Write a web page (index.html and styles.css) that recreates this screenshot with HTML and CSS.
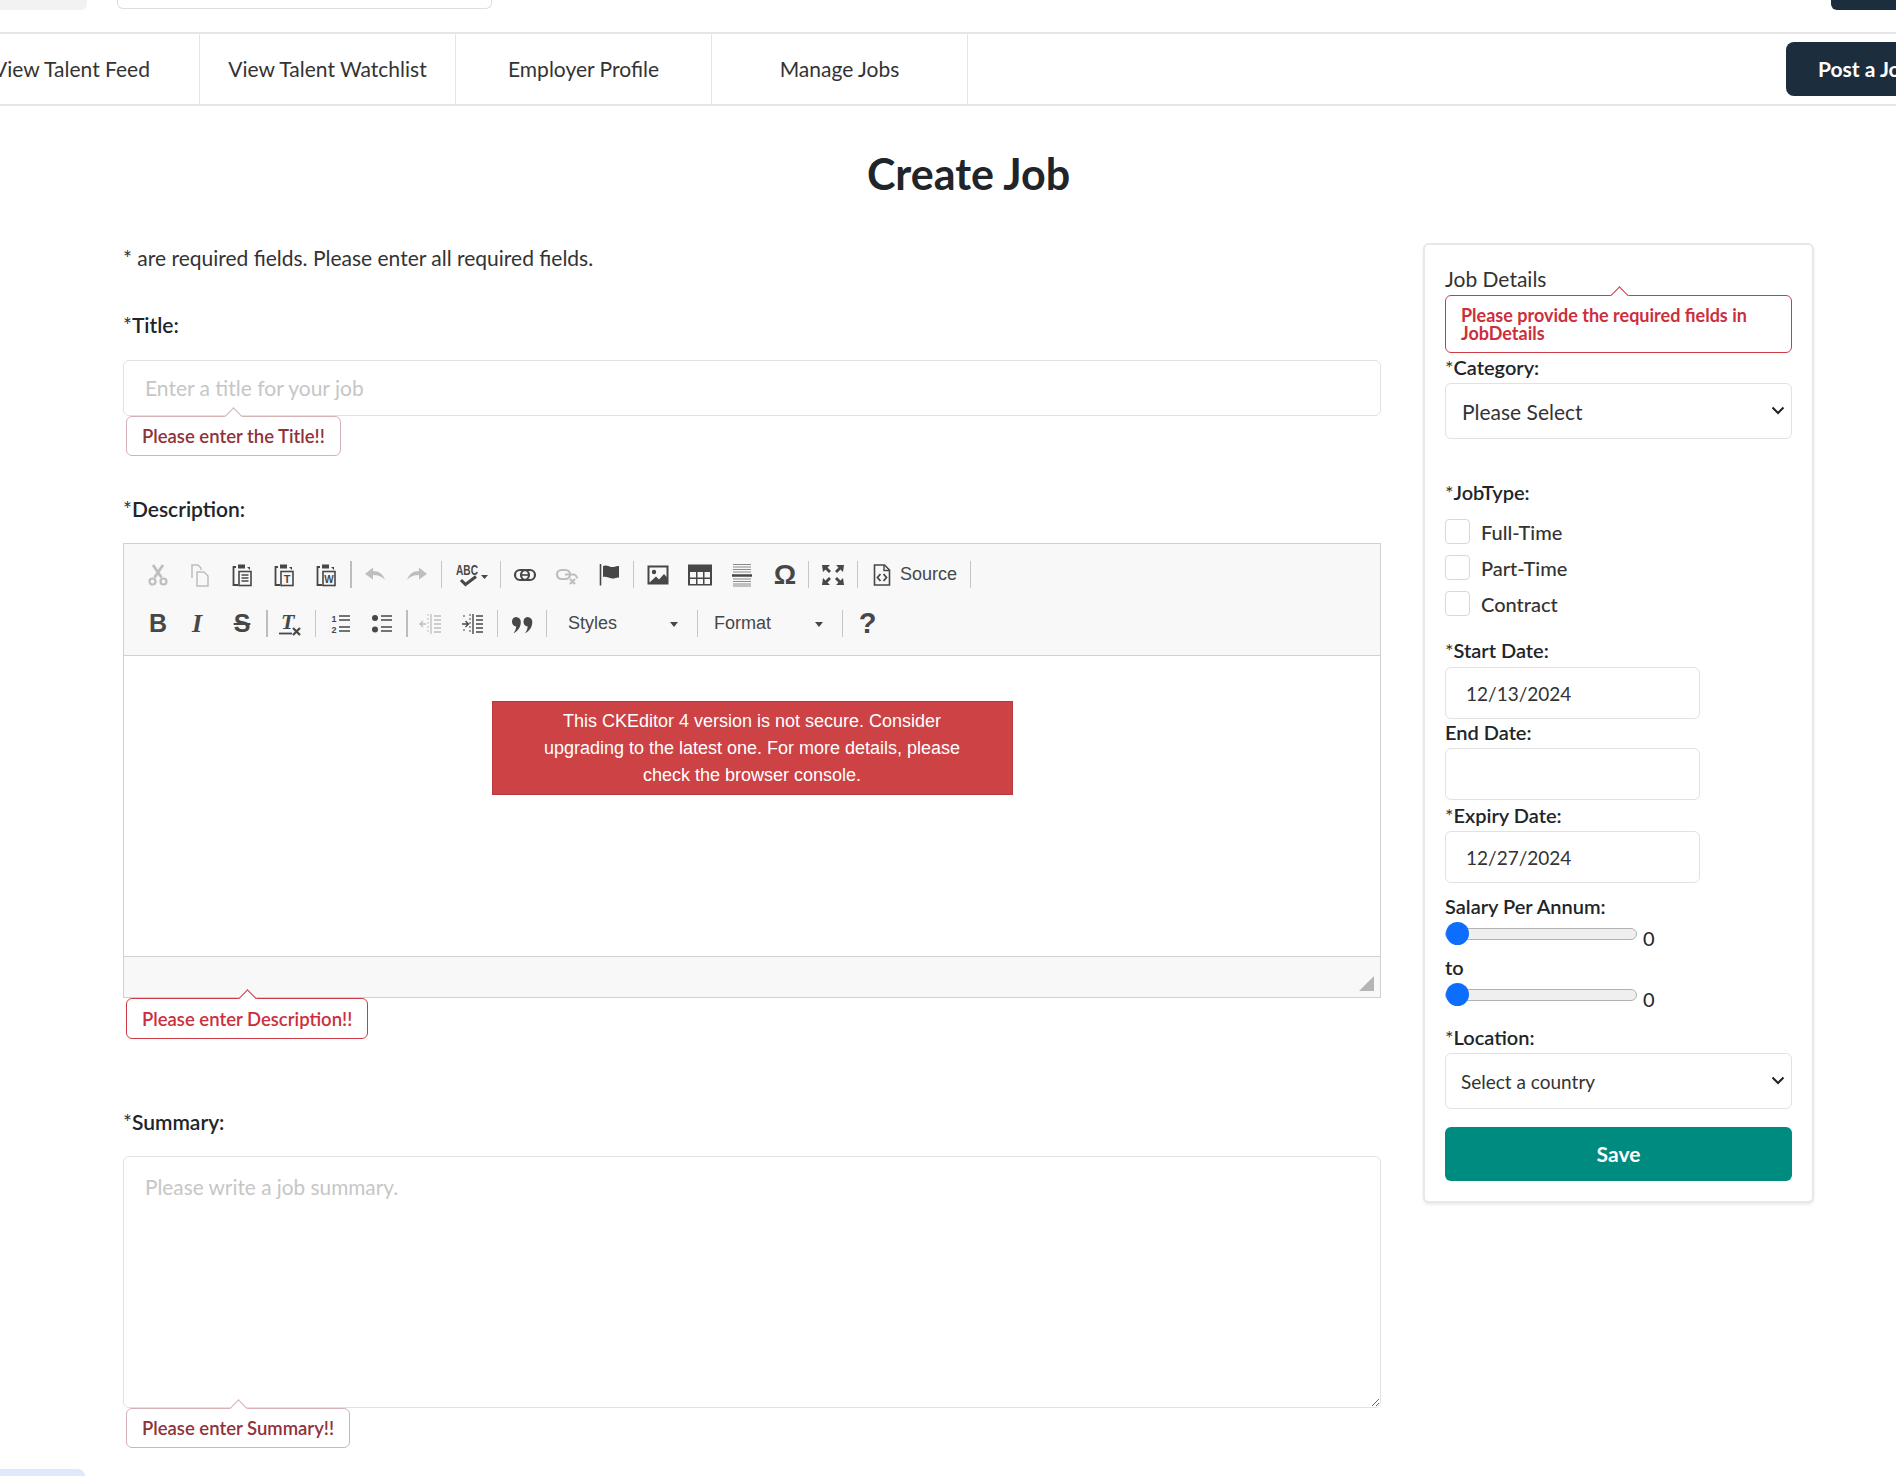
FILE: index.html
```html
<!DOCTYPE html>
<html lang="en">
<head>
<meta charset="utf-8">
<title>Create Job</title>
<link rel="stylesheet" href="styles.css">
</head>
<body>
<header class="topbar">
  <div class="top-chip"></div>
  <div class="top-search"></div>
  <div class="top-btn"></div>
</header>
<nav class="nav">
  <a class="nav-item">View Talent Feed</a>
  <a class="nav-item">View Talent Watchlist</a>
  <a class="nav-item">Employer Profile</a>
  <a class="nav-item">Manage Jobs</a>
  <button class="post-btn">Post a Job</button>
</nav>
<main class="page">
  <h1 class="page-title">Create Job</h1>
  <div class="columns">
    <section class="form-col">
      <p class="req-note">* are required fields. Please enter all required fields.</p>

      <label class="label label-title"><span class="star">*</span>Title:</label>
      <input class="field field-title" type="text" placeholder="Enter a title for your job">
      <div class="tip tip-faded">Please enter the Title!!</div>

      <label class="label label-desc"><span class="star">*</span>Description:</label>
      <div class="editor">
        <div class="toolbar">
          <div class="tb-row">
            <span class="ic off"><svg viewBox="0 0 24 24" width="24" height="24"><path d="M7 2l8.500 12.500M17 2L8.500 14.500" class="st" stroke-width="2.800"/><circle cx="6.500" cy="18.500" r="3" class="st" stroke-width="2.200"/><circle cx="17.500" cy="18.500" r="3" class="st" stroke-width="2.200"/></svg></span>
            <span class="ic off"><svg viewBox="0 0 24 24" width="24" height="24"><path d="M4 15V2h6l3 3v2" class="st" stroke-width="1.500"/><path d="M9 9h7l4 4v10H9z" class="st" stroke-width="1.500"/></svg></span>
            <span class="ic"><svg viewBox="0 0 24 24" width="24" height="24"><path d="M6 4H3.500v18H8" class="st" stroke-width="1.800"/><path d="M8 1.500h7v4H8zM17 4h3v3" class="fl"/><rect x="9" y="8.500" width="12" height="14" class="st" stroke-width="1.600"/><path d="M11.500 12h7M11.500 15h7M11.500 18h7" class="st" stroke-width="1.500"/></svg></span>
            <span class="ic"><svg viewBox="0 0 24 24" width="24" height="24"><path d="M6 4H3.500v18H8" class="st" stroke-width="1.800"/><path d="M8 1.500h7v4H8zM17 4h3v3" class="fl"/><rect x="9" y="8.500" width="12" height="14" class="st" stroke-width="1.600"/><text x="15" y="20" class="svg-t" font-size="11" text-anchor="middle">T</text></svg></span>
            <span class="ic"><svg viewBox="0 0 24 24" width="24" height="24"><path d="M6 4H3.500v18H8" class="st" stroke-width="1.800"/><path d="M8 1.500h7v4H8zM17 4h3v3" class="fl"/><rect x="9" y="8.500" width="12" height="14" class="st" stroke-width="1.600"/><text x="15" y="20" class="svg-t" font-size="10" text-anchor="middle">W</text></svg></span>
            <span class="sep sep-dark"></span>
            <span class="ic off"><svg viewBox="0 0 24 24" width="24" height="24"><path d="M2 11l8-6.500V8c6 0 10 3 12 9-3-3.500-7-5-12-5v4.500z" class="fl"/></svg></span>
            <span class="ic off"><svg viewBox="0 0 24 24" width="24" height="24"><path d="M22 11l-8-6.500V8C8 8 4 11 2 17c3-3.500 7-5 12-5v4.500z" class="fl"/></svg></span>
            <span class="sep"></span>
            <span class="ic ic-spell"><svg viewBox="0 0 34 24" width="34" height="24"><text x="12" y="12" class="svg-t" font-size="14" text-anchor="middle" textLength="22" lengthAdjust="spacingAndGlyphs">ABC</text><path d="M6 17l4.500 4.500L21 13.500" class="st" stroke-width="3"/><path d="M26 12h7l-3.500 4z" class="fl"/></svg></span>
            <span class="sep"></span>
            <span class="ic"><svg viewBox="0 0 24 24" width="24" height="24"><rect x="2" y="7" width="14" height="10" rx="5" class="st" stroke-width="2.200"/><rect x="8" y="7" width="14" height="10" rx="5" class="st" stroke-width="2.200"/><path d="M8 12h8" class="st" stroke-width="1.600"/></svg></span>
            <span class="ic off"><svg viewBox="0 0 24 24" width="24" height="24"><rect x="2" y="7" width="13" height="9" rx="4.500" class="st" stroke-width="2.200"/><path d="M10 11.500h8a4 4 0 0 1 4 4" class="st" stroke-width="2.200"/><path d="M15 16l5 5M20 16l-5 5" class="st" stroke-width="2.200"/></svg></span>
            <span class="ic"><svg viewBox="0 0 24 24" width="24" height="24"><path d="M3.500 1v21.500" class="st" stroke-width="1.600"/><path d="M6 3c4-2 7 1.500 10 1s4-1 6-1v11.500c-3-.5-4 1.500-7 1s-6-2.500-9-1.500z" class="fl"/></svg></span>
            <span class="sep"></span>
            <span class="ic"><svg viewBox="0 0 24 24" width="24" height="24"><rect x="2.500" y="3.500" width="19" height="17" class="st" stroke-width="2"/><circle cx="8" cy="9" r="2.200" class="fl"/><path d="M3 20l7-6.500 3 3 5-5.500 4 4.500V20z" class="fl"/></svg></span>
            <span class="ic"><svg viewBox="0 0 24 24" width="24" height="24"><path d="M0 1.500h24v21H0z" class="fl"/><path d="M2 9h6v5.500H2zM9.500 9h5.500v5.500H9.500zM16.500 9H22v5.500h-5.500zM2 16h6v5H2zM9.500 16h5.500v5H9.500zM16.500 16H22v5h-5.500z" fill="#f8f8f8"/></svg></span>
            <span class="ic"><svg viewBox="0 0 24 24" width="24" height="24"><path d="M3 1.500h18M3 4h18M3 6.500h18M3 9h18M3 16h18M3 18.500h18M3 21h18M3 23h18" class="st st-lt" stroke-width="1"/><path d="M2 12.500h20" class="st" stroke-width="2.500"/></svg></span>
            <span class="ic ic-glyph ic-omega">Ω</span>
            <span class="sep"></span>
            <span class="ic"><svg viewBox="0 0 24 24" width="24" height="24"><path d="M1 2h8L6.500 4.500 10 8 8 10 4.500 6.500 2 9z" class="fl"/><path d="M23 2h-8l2.500 2.500L14 8l2 2 3.500-3.500L22 9zM1 22h8l-2.500-2.500L10 16l-2-2-3.500 3.500L2 15zM23 22h-8l2.500-2.500L14 16l2-2 3.500 3.500L22 15z" class="fl"/></svg></span>
            <span class="sep"></span>
            <span class="tb-source"><svg viewBox="0 0 24 24" width="24" height="24"><path d="M4.500 2h10l5 5v15h-15z" class="st" stroke-width="1.600"/><path d="M14 2v5.500h5.500" class="st" stroke-width="1.400"/><path d="M10.500 11l-3 3.500 3 3.500M13.500 11l3 3.500-3 3.500" class="st" stroke-width="1.800"/></svg><span class="tb-text">Source</span></span>
            <span class="sep"></span>
          </div>
          <div class="tb-row">
            <span class="ic ic-glyph ic-b">B</span>
            <span class="ic ic-glyph ic-i">I</span>
            <span class="ic ic-glyph ic-s">S</span>
            <span class="sep sep-dark"></span>
            <span class="ic"><svg viewBox="0 0 26 24" width="26" height="24"><text x="3" y="17" class="svg-i" font-size="22">T</text><path d="M1 21.500h13" class="st" stroke-width="1.800"/><path d="M15 16l7 7M22 16l-7 7" class="st" stroke-width="2.200"/></svg></span>
            <span class="sep"></span>
            <span class="ic"><svg viewBox="0 0 24 24" width="24" height="24"><text x="6" y="10" class="svg-t" font-size="9" text-anchor="middle">1</text><text x="6" y="21" class="svg-t" font-size="9" text-anchor="middle">2</text><path d="M11 4h11M11 8h11M11 15h11M11 19h11" class="st" stroke-width="1.600"/></svg></span>
            <span class="ic"><svg viewBox="0 0 24 24" width="24" height="24"><circle cx="5" cy="6" r="3" class="fl"/><circle cx="5" cy="17.500" r="3" class="fl"/><path d="M11 4h11M11 8h11M11 15h11M11 19h11" class="st" stroke-width="1.600"/></svg></span>
            <span class="sep sep-dark"></span>
            <span class="ic off"><svg viewBox="0 0 24 24" width="24" height="24"><path d="M7 12H1M4 9l-3 3 3 3" class="st" stroke-width="1.300"/><path d="M9 2v20" class="st" stroke-width="1" stroke-dasharray="2 2"/><path d="M12 2v20" class="st" stroke-width="1.300"/><path d="M15 4h7M15 8h7M15 12h7M15 16h7M15 20h7" class="st" stroke-width="1.300"/></svg></span>
            <span class="ic"><svg viewBox="0 0 24 24" width="24" height="24"><path d="M1 12h6M4.500 9l3 3-3 3" class="st" stroke-width="1.300"/><path d="M9 2v20" class="st" stroke-width="1" stroke-dasharray="2 2"/><path d="M12 2v20" class="st" stroke-width="1.400"/><path d="M15 4h7M15 8h7M15 12h7M15 16h7M15 20h7" class="st" stroke-width="1.400"/><path d="M3 3v4M3 17v4" class="st" stroke-width="1" stroke-dasharray="2 2"/></svg></span>
            <span class="sep"></span>
            <span class="ic"><svg viewBox="0 0 24 24" width="24" height="24"><path d="M6 5a4.800 4.800 0 0 1 4.800 5.200c0 5-3.300 9-7.300 11 1.800-2.500 2.600-4.700 2.700-6.700A4.800 4.800 0 0 1 6 5z" class="fl"/><path d="M17.500 5a4.800 4.800 0 0 1 4.800 5.200c0 5-3.300 9-7.300 11 1.800-2.500 2.600-4.700 2.700-6.700a4.800 4.800 0 0 1-.2-9.500z" class="fl"/></svg></span>
            <span class="sep"></span>
            <span class="combo"><span class="tb-text">Styles</span><svg class="combo-arrow" viewBox="0 0 8 5" width="8" height="5"><path d="M0 0h8L4 5z" class="fl"/></svg></span>
            <span class="sep"></span>
            <span class="combo combo-format"><span class="tb-text">Format</span><svg class="combo-arrow" viewBox="0 0 8 5" width="8" height="5"><path d="M0 0h8L4 5z" class="fl"/></svg></span>
            <span class="sep"></span>
            <span class="ic ic-glyph ic-help">?</span>
          </div>
        </div>
        <div class="editor-body">
          <div class="ck-warning">This CKEditor 4 version is not secure. Consider upgrading to the latest one. For more details, please check the browser console.</div>
        </div>
        <div class="editor-foot">
          <svg viewBox="0 0 15 15" width="15" height="15"><path d="M15 0v15H0z" fill="#b5b5b5"/></svg>
        </div>
      </div>
      <div class="tip tip-strong">Please enter Description!!</div>

      <label class="label label-summary"><span class="star">*</span>Summary:</label>
      <textarea class="field field-summary" placeholder="Please write a job summary."></textarea>
      <div class="tip tip-faded">Please enter Summary!!</div>
    </section>

    <aside class="card">
      <div class="card-title">Job Details</div>
      <div class="tip tip-strong tip-card">Please provide the required fields in JobDetails</div>

      <label class="label lb lb-category"><span class="star">*</span>Category:</label>
      <div class="select-wrap">
        <select class="select select-cat"><option>Please Select</option></select>
        <svg class="chev" viewBox="0 0 14 9" width="14" height="9"><path d="M1.500 1.500L7 7l5.500-5.500" fill="none" stroke="#222" stroke-width="2"/></svg>
      </div>

      <label class="label lb lb-jobtype"><span class="star">*</span>JobType:</label>
      <div class="checks">
        <label class="check"><input type="checkbox" class="checkbox">Full-Time</label>
        <label class="check"><input type="checkbox" class="checkbox">Part-Time</label>
        <label class="check"><input type="checkbox" class="checkbox">Contract</label>
      </div>

      <label class="label lb lb-start"><span class="star">*</span>Start Date:</label>
      <input class="date" type="text" value="12/13/2024">
      <label class="label lb lb-end">End Date:</label>
      <input class="date date-end" type="text">
      <label class="label lb lb-expiry"><span class="star">*</span>Expiry Date:</label>
      <input class="date" type="text" value="12/27/2024">

      <label class="label lb lb-salary">Salary Per Annum:</label>
      <div class="range-row">
        <input class="range" type="range" min="0" max="100" value="0">
        <span class="range-val">0</span>
      </div>
      <label class="label lb lb-to">to</label>
      <div class="range-row">
        <input class="range" type="range" min="0" max="100" value="0">
        <span class="range-val">0</span>
      </div>

      <label class="label lb lb-location"><span class="star">*</span>Location:</label>
      <div class="select-wrap">
        <select class="select select-loc"><option>Select a country</option></select>
        <svg class="chev" viewBox="0 0 14 9" width="14" height="9"><path d="M1.500 1.500L7 7l5.500-5.500" fill="none" stroke="#222" stroke-width="2"/></svg>
      </div>
      <button class="save">Save</button>
    </aside>
  </div>
</main>
<div class="corner-chip"></div>
</body>
</html>
```

FILE: styles.css
```css
* { box-sizing: border-box; }
html, body { margin: 0; padding: 0; }
body {
  position: relative;
  width: 1896px;
  height: 1476px;
  overflow: hidden;
  background: #fff;
  color: #212529;
  font-family: "Lato", "Liberation Sans", sans-serif;
  font-size: 20px;
}

/* top strip */
.topbar {
  display: flex;
  align-items: flex-start;
  height: 34px;
  border-bottom: 2px solid #e6e6e6;
}
.top-chip { width: 87px; height: 10px; background: #f2f2f2; border-radius: 0 0 6px 0; }
.top-search { width: 375px; height: 9px; margin-left: 30px; background: #fff; border: 1px solid #dedede; border-top: 0; border-radius: 0 0 6px 6px; }
.top-btn { width: 65px; height: 10px; margin-left: auto; background: #1c2d3e; border-radius: 0 0 0 6px; }

/* nav */
.nav {
  display: flex;
  width: 2100px;
  height: 72px;
  margin-left: -56px;
  border-bottom: 2px solid #e6e6e6;
}
.nav-item {
  flex: none;
  display: flex;
  align-items: center;
  justify-content: center;
  width: 256px;
  height: 70px;
  padding-bottom: 2px;
  border-right: 1px solid #e6e6e6;
  color: #333;
  font-size: 21px;
}
.post-btn {
  flex: none;
  width: 190px;
  height: 54px;
  margin: 8px 0 0 818px;
  padding: 0 0 2px 32px;
  text-align: left;
  border: 0;
  border-radius: 8px;
  background: #1c2d3e;
  color: #fff;
  font: 700 21px "Lato", sans-serif;
}

/* page */
.page { width: 1691px; margin-left: 123px; }
.page-title {
  margin: 0;
  padding-top: 42px;
  height: 137px;
  line-height: 52px;
  text-align: center;
  font-size: 43px;
  font-weight: 700;
  color: #212529;
}
.columns { display: flex; align-items: flex-start; gap: 42px; }
.form-col { flex: none; width: 1258px; }
.req-note { margin: 0; height: 30px; line-height: 30px; color: #333; font-size: 21px; }

.label { display: block; height: 24px; line-height: 24px; font-size: 21px; font-weight: 600; color: #212529; }
.lb { font-size: 20px; }
.star { font-weight: 400; color: #333; }
.label-title { margin-top: 40px; }
.label-desc { margin-top: 41px; }
.label-summary { margin-top: 71px; }

.field {
  display: block;
  width: 100%;
  border: 1px solid #e2e2e2;
  border-radius: 6px;
  background: #fff;
  font: 400 21px "Lato", sans-serif;
  color: #333;
  outline: 0;
}
.field::placeholder { color: #c6c6c6; opacity: 1; }
.field-title { height: 56px; margin-top: 23px; padding: 0 21px 2px; }
.field-summary { height: 252px; margin-top: 22px; padding: 17px 21px; resize: both; font-size: 20.800px; }

/* validation tooltips */
.tip {
  position: relative;
  width: fit-content;
  margin-left: 3px;
  padding: 0 15px;
  height: 40px;
  line-height: 38px;
  border: 1px solid #cc3b46;
  border-radius: 6px;
  background: #fff;
  color: #cc2f3c;
  font-size: 18.500px;
  font-weight: 600;
}
.tip::before {
  content: "";
  position: absolute;
  left: 50%;
  top: -7px;
  width: 12px;
  height: 12px;
  margin-left: -6px;
  background: inherit;
  border-top: 1px solid;
  border-left: 1px solid;
  border-color: inherit;
  transform: rotate(45deg);
}
.tip-faded { color: #90323a; border-color: #d3b1b4; }
.tip-strong { height: 41px; line-height: 40px; }
.tip-card {
  margin: 4px 0 0;
  width: 100%;
  height: 58px;
  padding: 10px 15px;
  line-height: 18px;
  font-size: 18px;
  font-weight: 700;
}

/* editor */
.editor { margin-top: 22px; height: 455px; border: 1px solid #d1d1d1; display: flex; flex-direction: column; }
.toolbar {
  flex: none;
  height: 112px;
  padding: 6px 0 0 13px;
  background: #f8f8f8;
  border-bottom: 1px solid #d1d1d1;
}
.tb-row { display: flex; align-items: center; height: 49px; }
.ic { flex: none; display: flex; align-items: center; justify-content: center; width: 42px; height: 49px; color: #474747; }
.off { opacity: .32; }
.ic-spell { width: 52px; justify-content: flex-start; padding-left: 10px; }
.st { fill: none; stroke: #474747; }
.st-lt { stroke: #8a8a8a; }
.fl { fill: #474747; }
.svg-t { fill: #474747; font-family: "Liberation Sans", sans-serif; font-weight: 700; }
.svg-i { fill: #474747; font-family: "Liberation Serif", serif; font-weight: 700; font-style: italic; }
.sep { flex: none; width: 1px; height: 27px; margin: 0 3px; background: #c6c6c6; }
.sep-dark { width: 2px; margin: 0 2.500px; background: #bdbdbd; }
.ic-glyph { font-weight: 700; line-height: 1; }
.ic-b { font: 700 25px "Liberation Sans", sans-serif; }
.ic-i { font: italic 700 26px "Liberation Serif", serif; padding-right: 6px; }
.ic-s { font: 700 25px "Liberation Sans", sans-serif; text-decoration: line-through; text-decoration-thickness: 2px; }
.ic-omega { font: 700 28px "Liberation Sans", sans-serif; padding-left: 2px; }
.ic-help { font: 700 29px "Liberation Sans", sans-serif; padding-left: 2px; }
.tb-source { flex: none; display: flex; align-items: center; width: 106px; height: 49px; padding-left: 9px; gap: 6px; }
.tb-text { font: 400 18px "Liberation Sans", sans-serif; color: #474747; }
.combo { flex: none; position: relative; display: flex; align-items: center; width: 144px; height: 49px; padding-left: 18px; }
.combo-format { padding-left: 13px; width: 137.500px; }
.combo-arrow { position: absolute; right: 16px; top: 23px; }
.editor-body { flex: 1; display: flex; justify-content: center; align-items: flex-start; background: #fff; padding-top: 45px; }
.ck-warning {
  width: 521px;
  height: 94px;
  padding: 6px 30px;
  border: 1px solid #b63a3d;
  background: #cd4245;
  color: #fff;
  text-align: center;
  font: 400 18px/27px "Liberation Sans", sans-serif;
}
.editor-foot {
  flex: none;
  display: flex;
  justify-content: flex-end;
  height: 41px;
  padding: 19px 6px 0 0;
  background: #f8f8f8;
  border-top: 1px solid #d1d1d1;
}

/* side card */
.card {
  flex: none;
  width: 391px;
  height: 960px;
  padding: 22px 20px 0;
  border: 2px solid #e8e8e8;
  border-radius: 6px;
  background: #fff;
  box-shadow: 0 2px 3px rgba(0,0,0,.08);
}
.card-title { height: 24px; line-height: 24px; font-size: 21px; color: #333; }
.lb-category { margin-top: 2px; }
.lb-jobtype { margin-top: 41px; }
.lb-start { margin-top: 22px; }
.lb-end { margin-top: 1px; }
.lb-expiry { margin-top: 3px; }
.lb-salary { margin-top: 11px; }
.lb-to { margin-top: 5px; }
.lb-location { margin-top: 14px; }
.lb-start + .date { margin-top: 5px; }
.lb-end + .date { margin-top: 4px; }
.lb-expiry + .date { margin-top: 4px; }

.select-wrap { position: relative; margin-top: 4px; }
.select {
  display: block;
  width: 100%;
  height: 56px;
  appearance: none;
  -webkit-appearance: none;
  border: 1px solid #e2e2e2;
  border-radius: 6px;
  background: #fff;
  color: #333;
  outline: 0;
  font-family: "Lato", sans-serif;
}
.select-cat { padding: 0 16px; font-size: 21px; }
.select-loc { padding: 0 15px; font-size: 19px; }
.chev { position: absolute; right: 7px; top: 23px; pointer-events: none; }

.checks { display: flex; flex-direction: column; gap: 11px; margin-top: 15px; }
.check { display: flex; align-items: center; height: 25px; font-size: 20px; font-weight: 500; color: #333; }
.checkbox {
  flex: none;
  appearance: none;
  -webkit-appearance: none;
  width: 25px;
  height: 25px;
  margin: 0 11px 0 0;
  border: 1px solid #d8d8d8;
  border-radius: 4px;
  background: #fff;
}
.date {
  display: block;
  width: 255px;
  height: 52px;
  margin-top: 3px;
  padding: 0 20px;
  border: 1px solid #e2e2e2;
  border-radius: 6px;
  background: #fff;
  outline: 0;
  color: #333;
  font: 400 19px "Lato", sans-serif;
}

.range-row { display: flex; align-items: flex-start; margin-top: 4px; height: 28px; }
.range {
  flex: none;
  width: 192px;
  height: 23px;
  margin: 0;
  background: transparent;
  appearance: none;
  -webkit-appearance: none;
}
.range::-webkit-slider-runnable-track {
  height: 12px;
  background: #efefef;
  border: 1px solid #b2b2b2;
  border-radius: 6px;
}
.range::-webkit-slider-thumb {
  -webkit-appearance: none;
  width: 23px;
  height: 23px;
  margin-top: -6.500px;
  border: 0;
  border-radius: 50%;
  background: #0d6efd;
}
.range-val { margin: 4px 0 0 6px; line-height: 24px; font-size: 20px; color: #212529; }

.save {
  display: block;
  width: 100%;
  height: 54px;
  margin-top: 18px;
  padding-bottom: 2px;
  border: 0;
  border-radius: 6px;
  background: #008b80;
  color: #fff;
  font: 700 21px "Lato", sans-serif;
}

.corner-chip {
  position: absolute;
  left: 0;
  bottom: 0;
  width: 85px;
  height: 7px;
  background: #dfe9fb;
  border-radius: 0 8px 0 0;
}
```
